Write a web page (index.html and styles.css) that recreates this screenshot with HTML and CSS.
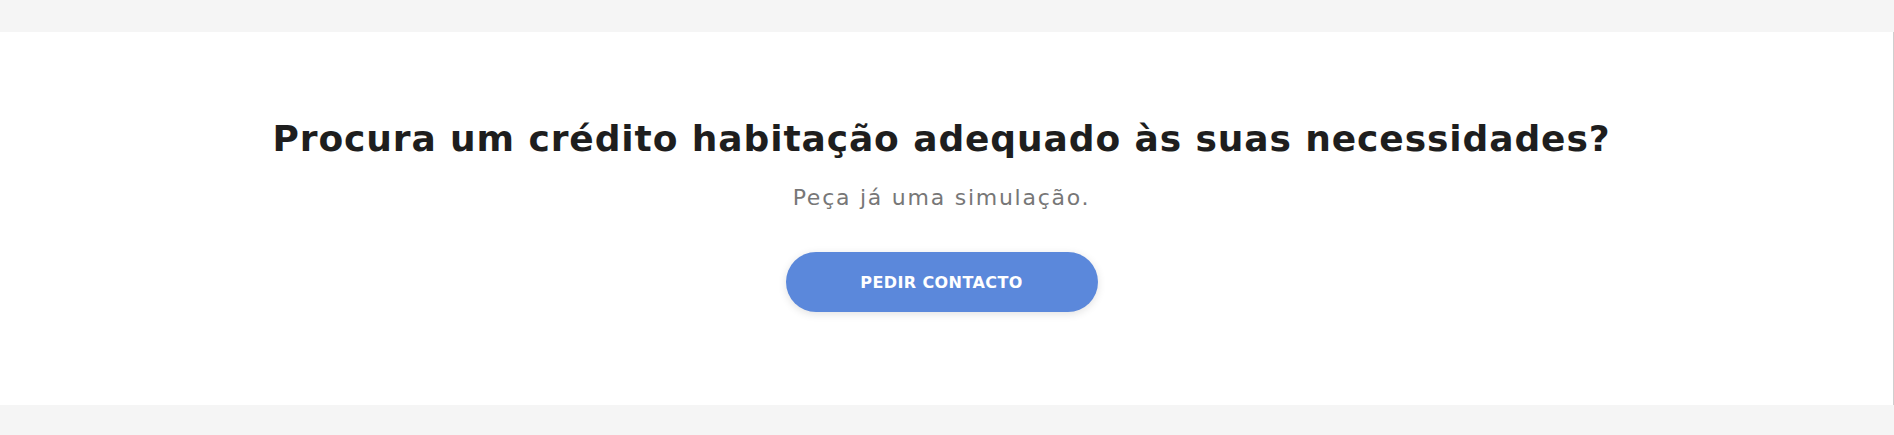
FILE: index.html
```html
<!DOCTYPE html>
<html lang="pt">

<head>
  <meta charset="UTF-8">
  <meta name="viewport" content="width=device-width, initial-scale=1.0">
  <title>Crédito Habitação</title>
  <link rel="stylesheet" href="styles.css">
</head>

<body>
  <section class="cta-section">
    <h2 class="cta-title">Procura um crédito habitação adequado às suas necessidades?</h2>
    <p class="cta-subtitle">Peça já uma simulação.</p>
    <a href="#" class="cta-button">PEDIR CONTACTO</a>
  </section>
</body>

</html>
```

FILE: styles.css
```css
:root {
  --page-bg: #f5f5f5;
  --title-color: #1e1e1e;
  --subtitle-color: #777777;
  --accent-color: #5b88db;
}

* {
  box-sizing: border-box;
  margin: 0;
  padding: 0;
}

body {
  background-color: var(--page-bg);
  font-family: 'DejaVu Sans', Inter, sans-serif;
  padding: 32px 0 30px 0;
}

.cta-section {
  background-color: #ffffff;
  border-right: 1px solid #cfcfcf;
  display: flex;
  flex-direction: column;
  align-items: center;
  /* content sits a little left of centre, as in the original */
  padding: 85px 30px 93px 20px;
}

.cta-title {
  color: var(--title-color);
  font-size: 36px;
  line-height: 44px;
  font-weight: 700;
  letter-spacing: 0.9px;
  text-align: center;
}

.cta-subtitle {
  color: var(--subtitle-color);
  font-size: 22px;
  line-height: 30px;
  letter-spacing: 1.75px;
  margin-top: 22px;
}

.cta-button {
  margin-top: 39px;
  width: 312px;
  height: 60px;
  border-radius: 30px;
  background-color: var(--accent-color);
  color: #ffffff;
  font-size: 16px;
  font-weight: 700;
  letter-spacing: 0.4px;
  text-decoration: none;
  display: flex;
  align-items: center;
  justify-content: center;
  box-shadow: 0 2px 8px rgba(0, 0, 0, 0.12);
}
```
